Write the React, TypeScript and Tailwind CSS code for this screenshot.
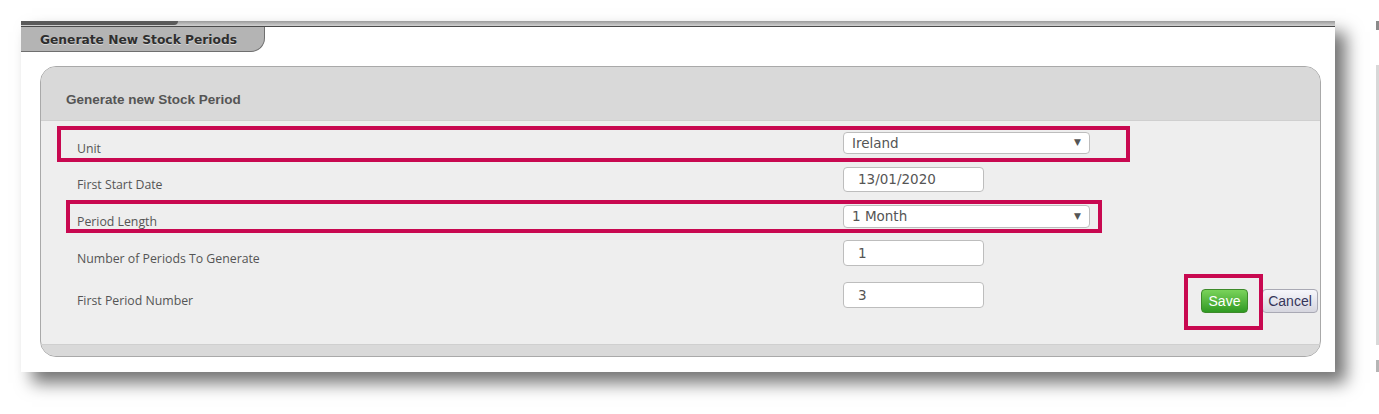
import { ReactNode } from 'react';

const labelFont = { fontFamily: '"Open Sans", "Noto Sans", sans-serif' };

function Label({ children }: { children: ReactNode }) {
  return (
    <div className="w-[802px] shrink-0 pl-[36px] pt-3 text-[12.3px] text-[#555]" style={labelFont}>
      {children}
    </div>
  );
}

function Row({ label, className, children }: { label: string; className?: string; children: ReactNode }) {
  return (
    <div className={`flex items-center ${className ?? ''}`}>
      <Label>{label}</Label>
      {children}
    </div>
  );
}

function TextBox({ value, h }: { value: string; h: string }) {
  return (
    <div
      className={`flex w-[141px] ${h} items-center rounded-[4px] border border-[#bdbdbd] bg-white pl-[14px] font-['DejaVu_Sans',sans-serif] text-[13.5px] text-[#555]`}
    >
      {value}
    </div>
  );
}

function SelectBox({ value, h }: { value: string; h: string }) {
  return (
    <div
      className={`flex w-[247px] ${h} items-center justify-between rounded-[4px] border border-[#bdbdbd] bg-white pl-[8px] pr-[8px] font-['DejaVu_Sans',sans-serif] text-[13.5px] text-[#555]`}
    >
      <span>{value}</span>
      <span className="text-[9px] text-[#555]">▼</span>
    </div>
  );
}

export default function App() {
  return (
    <div className="flex h-[414px] w-[1379px] bg-white pl-[21px] pt-[21px]">
      {/* card */}
      <div className="relative h-[351px] w-[1314px] shrink-0 bg-white shadow-[11px_11px_16px_rgba(0,0,0,0.55)]">
        {/* top strip */}
        <div className="relative h-[6px] border-b border-[#4a4a4a] bg-gradient-to-b from-[#9a9a9a] to-[#d2d2d2]">
          <div className="h-[4px] w-[157px] rounded-br-[5px] bg-[#5a5a5a]" />
        </div>
        {/* tab */}
        <div className="flex h-[25px] w-[244px] items-center rounded-br-[14px] border-r border-b border-[#6f6f6f] bg-[#b4b4b4] pl-[19px] pt-[2px] font-['DejaVu_Sans',sans-serif] text-[12.25px] font-bold text-[#2e2e2e] [text-shadow:0_1px_0_rgba(255,255,255,0.5)]">
          Generate New Stock Periods
        </div>

        {/* panel */}
        <div className="mt-[14px] ml-[19px] mr-[14px] overflow-hidden rounded-[16px] border border-[#a9a9a9] bg-[#eeeeee]">
          <div className="flex h-[54px] items-end border-b border-[#cfcfcf] bg-[#d9d9d9] pb-[10px] pl-[25px] font-['Liberation_Sans',Arial,sans-serif] text-[13.5px] font-bold text-[#555]">
            Generate new Stock Period
          </div>
          <div className="flex h-[223px] flex-col pt-[11px]">
            <Row label="Unit" className="h-[22px]">
              <SelectBox value="Ireland" h="h-[22px]" />
            </Row>
            <Row label="First Start Date" className="mt-[13px] h-[25px]">
              <TextBox value="13/01/2020" h="h-[25px]" />
            </Row>
            <Row label="Period Length" className="mt-[13px] h-[23px]">
              <SelectBox value="1 Month" h="h-[23px]" />
            </Row>
            <Row label="Number of Periods To Generate" className="mt-[12px] h-[26px]">
              <TextBox value="1" h="h-[26px]" />
            </Row>
            <div className="mt-[16px] flex h-[26px] items-start">
              <Row label="First Period Number" className="h-[26px]">
                <TextBox value="3" h="h-[26px]" />
              </Row>
              <div className="ml-[217px] mt-[7px] flex items-center gap-[14px] font-['Liberation_Sans',Arial,sans-serif] text-[14px]">
                <div className="flex h-[24px] w-[47px] items-center justify-center rounded-[4px] border border-[#3d8a2a] bg-gradient-to-b from-[#79d35a] to-[#2f9a22] text-white">
                  Save
                </div>
                <div className="flex h-[24px] w-[56px] items-center justify-center rounded-[4px] border border-[#a9a9b4] bg-gradient-to-b from-[#f6f6fb] to-[#d6d6df] text-[#36365a]">
                  Cancel
                </div>
              </div>
            </div>
          </div>
          <div className="h-[12px] border-t border-[#cfcfcf] bg-[#d9d9d9]" />
        </div>

        {/* highlight annotations */}
        <div className="pointer-events-none absolute left-[36px] top-[105px] h-[36px] w-[1073px] border-[4px] border-[#c80850]" />
        <div className="pointer-events-none absolute left-[45px] top-[179px] h-[33px] w-[1036px] border-[4px] border-[#c80850]" />
        <div className="pointer-events-none absolute left-[1163px] top-[253px] h-[56px] w-[79px] border-[4px] border-[#c80850]" />
      </div>

      {/* edge of neighbouring window */}
      <div className="ml-[41px] flex h-[351px] w-[3px] shrink-0 flex-col">
        <div className="h-[9px] bg-[#8a8a8a]" />
        <div className="mt-[35px] h-[280px] bg-[#d8d8d8]" />
        <div className="mt-[15px] h-[12px] bg-[#b5b5b5]" />
      </div>
    </div>
  );
}
